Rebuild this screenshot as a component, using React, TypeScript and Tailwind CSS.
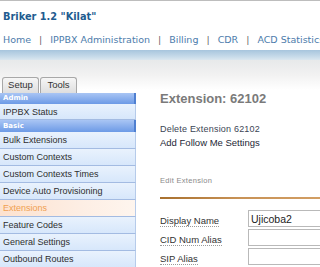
import React from "react";

const navItems = ["Home", "IPPBX Administration", "Billing", "CDR", "ACD Statistics"];

type MenuRow = { label: string; kind: "head" | "item"; active?: boolean };

const menu: MenuRow[] = [
  { label: "Admin", kind: "head" },
  { label: "IPPBX Status", kind: "item" },
  { label: "Basic", kind: "head" },
  { label: "Bulk Extensions", kind: "item" },
  { label: "Custom Contexts", kind: "item" },
  { label: "Custom Contexts Times", kind: "item" },
  { label: "Device Auto Provisioning", kind: "item" },
  { label: "Extensions", kind: "item", active: true },
  { label: "Feature Codes", kind: "item" },
  { label: "General Settings", kind: "item" },
  { label: "Outbound Routes", kind: "item" },
];

const fields = [
  { label: "Display Name", value: "Ujicoba2" },
  { label: "CID Num Alias", value: "" },
  { label: "SIP Alias", value: "" },
];

function Sidebar() {
  return (
    <div className="w-[136px] shrink-0">
      {/* Tabs */}
      <div className="flex h-[16px] items-end gap-[1px] pl-[2px]">
        {["Setup", "Tools"].map((t) => (
          <div
            key={t}
            className="flex h-[16px] w-[37px] items-center justify-center rounded-t-[3px] border border-b-0 border-[#a8a8a8] bg-[linear-gradient(#f6f6f6,#dedede)] text-[9.5px] text-[#333]"
          >
            {t}
          </div>
        ))}
      </div>

      {menu.map((row, i) => {
        if (row.kind === "head") {
          return (
            <div
              key={row.label}
              className={`flex items-center border-r-2 border-[#4f7fd0] bg-[linear-gradient(#a9c5f4,#6c9ae6)] pl-[3px] text-[7px] font-bold text-white ${
                i === 0 ? "h-[11px]" : "h-[12px]"
              }`}
              style={{ fontFamily: '"DejaVu Sans", Verdana, sans-serif' }}
            >
              {row.label}
            </div>
          );
        }
        const tall = i === 1 ? "h-[16px]" : "h-[17px]";
        return (
          <div
            key={row.label}
            className={`flex ${tall} items-center border-r border-b border-r-[#b6cbea] border-b-[#a3bbe2] pt-[2px] pl-[3px] text-[9px] ${
              row.active
                ? "bg-[linear-gradient(to_right,#fde2cf,#fdeee4_60%,#fef5ee)] text-[#f0a050]"
                : "bg-[linear-gradient(#e9f2fd,#d7e7fb)] text-[#2e2e2e]"
            }`}
          >
            {row.label}
          </div>
        );
      })}
    </div>
  );
}

function Content() {
  return (
    <div className="ml-[24px] flex-1 pt-[31px]">
      <h1 className="text-[13px] leading-[16px] font-bold text-[#7a7a7a]">Extension: 62102</h1>
      <p className="mt-[16px] text-[9px] leading-[12px] tracking-[0.2px] text-[#3b4554]">
        Delete Extension 62102
      </p>
      <p className="mt-[2px] text-[9.5px] leading-[12px] text-[#1d2736]">Add Follow Me Settings</p>
      <p className="mt-[27px] text-[7.5px] leading-[10px] tracking-[0.3px] text-[#8a8a8a]">
        Edit Extension
      </p>
      <div className="mt-[11px] h-[2px] bg-[linear-gradient(to_right,#a8702e,#c89256_40%,#d7a46a)]" />
      <div className="mt-[11px] flex flex-col gap-[2px]">
        {fields.map((f) => (
          <div key={f.label} className="flex h-[17px] items-center">
            <div className="w-[88px] shrink-0">
              <span className="border-b border-dotted border-[#9a9a9a] text-[9.5px] leading-[11px] text-[#333]">
                {f.label}
              </span>
            </div>
            <input
              readOnly
              defaultValue={f.value}
              className="h-[17px] w-[110px] shrink-0 border border-[#b9b9b9] bg-white px-[2px] text-[10.5px] text-[#222] outline-none"
              style={{ fontFamily: '"Liberation Sans", Arial, sans-serif' }}
            />
          </div>
        ))}
      </div>
    </div>
  );
}

export default function App() {
  return (
    <div
      className="h-[267px] w-[320px] overflow-hidden border-t border-[#bdbdbd] bg-white"
      style={{ fontFamily: '"Liberation Sans", Arial, sans-serif' }}
    >
      <div style={{ fontFamily: '"DejaVu Sans", Verdana, sans-serif' }}>
        <div className="h-[30px] pt-[10px] pl-[3px] text-[9.8px] leading-[12px] font-bold text-[#215b8f]">
          Briker 1.2 "Kilat"
        </div>
        <nav className="flex h-[19px] items-center overflow-hidden whitespace-nowrap pl-[3px] text-[9.5px] text-[#4d7cab]">
          {navItems.map((n, i) => (
            <React.Fragment key={n}>
              {i > 0 && <span className="mx-[8px] text-[#6a6a6a]">|</span>}
              <span className="shrink-0">{n}</span>
            </React.Fragment>
          ))}
        </nav>
      </div>
      <div className="h-[10px] bg-[linear-gradient(#a7c5dd,#c9dcea_70%,#dbe7ef)]" />
      <div className="flex bg-[linear-gradient(#e7e9ea,#f1f1f1_14px,#ffffff_30px)] pt-[17px]">
        <Sidebar />
        <div className="-mt-[17px] flex flex-1">
          <Content />
        </div>
      </div>
    </div>
  );
}
